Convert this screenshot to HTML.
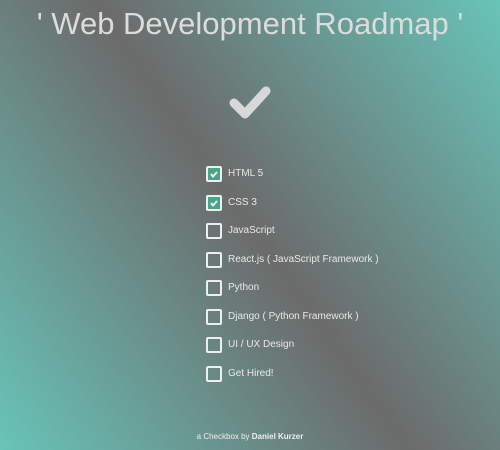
<!DOCTYPE html>
<html><head><style>
body{margin:0;width:500px;height:450px;overflow:hidden;background:linear-gradient(55deg,#68c4b8 0%,#6b6b6b 50%,#68c4b8 100%);font-family:"Liberation Sans",sans-serif;color:#ddd;position:relative}
h1{position:absolute;top:6px;left:0;width:500px;margin:0;text-align:center;font-weight:normal;font-size:31px;white-space:nowrap;color:#dcdcdc;font-family:"Liberation Sans",sans-serif}
.chk{position:absolute;left:228px;top:82px}
.row{position:absolute;left:206px;height:16px;font-size:10px;color:#e8e8e8;white-space:nowrap}
.box{position:absolute;left:0;top:0;width:12px;height:12px;border:2px solid #eee;border-radius:2px}
.box.on{background:#48a58b}
.row span{position:absolute;left:22px;top:2px}
.foot{position:absolute;top:432px;left:0;width:500px;text-align:center;font-size:8px;color:#eee}
</style></head><body>
<h1>' Web Development Roadmap '</h1>
<svg class="chk" width="44" height="40" viewBox="0 0 44 40"><path d="M6 21 L17 32 L38 9" fill="none" stroke="#d8d8d8" stroke-width="9" stroke-linecap="round" stroke-linejoin="round"/></svg>
<div class="row" style="top:166px"><div class="box on"><svg width="12" height="12" viewBox="0 0 12 12"><path d="M3 6 L5 8.5 L9 4" fill="none" stroke="#eee" stroke-width="2"/></svg></div><span>HTML 5</span></div>
<div class="row" style="top:195px"><div class="box on"><svg width="12" height="12" viewBox="0 0 12 12"><path d="M3 6 L5 8.5 L9 4" fill="none" stroke="#eee" stroke-width="2"/></svg></div><span>CSS 3</span></div>
<div class="row" style="top:223px"><div class="box"></div><span>JavaScript</span></div>
<div class="row" style="top:252px"><div class="box"></div><span>React.js ( JavaScript Framework )</span></div>
<div class="row" style="top:280px"><div class="box"></div><span>Python</span></div>
<div class="row" style="top:309px"><div class="box"></div><span>Django ( Python Framework )</span></div>
<div class="row" style="top:337px"><div class="box"></div><span>UI / UX Design</span></div>
<div class="row" style="top:366px"><div class="box"></div><span>Get Hired!</span></div>
<div class="foot">a Checkbox by <b>Daniel Kurzer</b></div>
</body></html>
